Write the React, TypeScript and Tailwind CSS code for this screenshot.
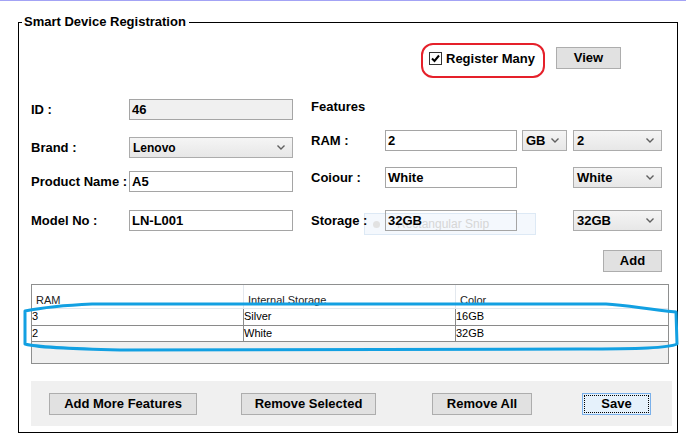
import React from 'react';

const font = { fontFamily: '"Liberation Sans", Arial, sans-serif' };

const Chevron = () => (
  <svg width="8" height="5" viewBox="0 0 8 5" className="shrink-0">
    <path d="M0.5 0.5 L4 4 L7.5 0.5" fill="none" stroke="#606060" strokeWidth="1.4" />
  </svg>
);

const TextBox = ({ value, width, bg = 'bg-white' }: { value: string; width: string; bg?: string }) => (
  <div
    className={`${width} ${bg} h-[21px] border border-[#a5a5a5] flex items-center pl-[2px] text-[13px] font-bold text-black`}
  >
    {value}
  </div>
);

const Select = ({ value, width, small, className = '' }: { value: string; width: string; small?: boolean; className?: string }) => (
  <div
    className={`${width} h-[21px] border border-[#acacac] bg-gradient-to-b from-[#f5f5f5] to-[#e7e7e7] flex items-center justify-between pl-[3px] pr-[7px] font-bold text-black ${
      small ? 'text-[12px]' : 'text-[13px]'
    } ${className}`}
  >
    <span>{value}</span>
    <Chevron />
  </div>
);

const Button = ({ label, width, className = '' }: { label: string; width: string; className?: string }) => (
  <div
    className={`${width} h-[22px] border border-[#adadad] bg-[#e1e1e1] flex items-center justify-center text-[13px] font-bold text-black ${className}`}
  >
    {label}
  </div>
);

const LeftRow = ({ label, children, className = '' }: { label: string; children: React.ReactNode; className?: string }) => (
  <div className={`flex items-center h-[21px] ${className}`}>
    <span className="w-[98px] text-[13px] font-bold text-black">{label}</span>
    {children}
  </div>
);

const RightRow = ({ label, children, className = '' }: { label: string; children: React.ReactNode; className?: string }) => (
  <div className={`flex items-center h-[21px] ${className}`}>
    <span className="w-[74px] text-[13px] font-bold text-black">{label}</span>
    {children}
  </div>
);

const rows = [
  ['3', 'Silver', '16GB'],
  ['2', 'White', '32GB'],
];

export default function App() {
  return (
    <div className="relative w-[686px] h-[436px] bg-white border-t border-[#a3a3f5] overflow-hidden" style={font}>
      <div className="relative mt-[21px] ml-[18px] w-[660px] h-[411px] border border-black">
        {/* group title */}
        <span className="absolute left-[3px] -top-[9px] bg-white pl-[2px] pr-[3px] text-[13px] leading-[16px] font-bold text-black">
          Smart Device Registration
        </span>

        <div className="pl-[12px]">
          {/* register many + view */}
          <div className="flex justify-end items-start pr-[56px] mt-[20px]">
            <div className="w-[124px] h-[35px] border-2 border-[#e5202a] rounded-[12px] flex items-start pl-[6px] pt-[7px]">
              <div className="w-[13px] h-[13px] border border-[#333] bg-white flex items-center justify-center">
                <svg width="11" height="11" viewBox="0 0 11 11">
                  <path d="M2 5.5 L4.5 8 L9 2.5" fill="none" stroke="#000" strokeWidth="2" />
                </svg>
              </div>
              <span className="ml-[4px] -mt-[1px] text-[13px] leading-[15px] font-bold text-black">Register Many</span>
            </div>
            <Button label="View" width="w-[65px]" className="ml-[11px] mt-[4px]" />
          </div>

          {/* form */}
          <div className="flex mt-[21px]">
            <div className="w-[280px]">
              <LeftRow label="ID :">
                <TextBox value="46" width="w-[164px]" bg="bg-[#f0f0f0]" />
              </LeftRow>
              <LeftRow label="Brand :" className="mt-[17px]">
                <Select value="Lenovo" width="w-[164px]" small />
              </LeftRow>
              <LeftRow label="Product Name :" className="mt-[13px]">
                <TextBox value="A5" width="w-[164px]" />
              </LeftRow>
              <LeftRow label="Model No :" className="mt-[18px]">
                <TextBox value="LN-L001" width="w-[164px]" />
              </LeftRow>
            </div>

            <div>
              <div className="h-[16px] flex items-center text-[13px] font-bold text-black">Features</div>
              <RightRow label="RAM :" className="mt-[15px]">
                <TextBox value="2" width="w-[132px]" />
                <Select value="GB" width="w-[45px]" className="ml-[5px]" />
                <Select value="2" width="w-[89px]" className="ml-[6px]" />
              </RightRow>
              <RightRow label="Coiour :" className="mt-[16px]">
                <TextBox value="White" width="w-[132px]" />
                <Select value="White" width="w-[89px]" className="ml-[56px]" />
              </RightRow>
              <div className="relative mt-[22px]">
                {/* faded snip tooltip left behind the storage field */}
                <div className="absolute left-[53px] top-[3px] w-[172px] h-[22px] border border-[#dde9f5] bg-[#f4f8fd] flex items-center pointer-events-none">
                  <span className="w-[7px] h-[7px] rounded-full bg-[#e2e2e2] ml-[8px]" />
                  <span className="ml-[17px] text-[12px] text-[#d6d6d6]">Rectangular Snip</span>
                </div>
                <RightRow label="Storage :" className="relative">
                  <TextBox value="32GB" width="w-[132px]" bg="bg-transparent" />
                  <Select value="32GB" width="w-[89px]" className="ml-[56px]" />
                </RightRow>
              </div>
            </div>
          </div>

          {/* add */}
          <div className="w-[631px] flex justify-end mt-[19px]">
            <Button label="Add" width="w-[59px]" />
          </div>

          {/* grid */}
          <div className="mt-[12px] w-[638px] h-[80px] border border-[#8e8f8f] flex flex-col text-[11px] text-black">
            <div className="flex h-[24px] bg-white border-b border-[#e3e8ee] shrink-0">
              <div className="w-[212px] border-r border-[#e3e8ee] pl-[4px] pt-[7px] text-[#222]">RAM</div>
              <div className="w-[212px] border-r border-[#e3e8ee] pl-[4px] pt-[7px] text-[#222]">Internal Storage</div>
              <div className="flex-1 pl-[4px] pt-[7px] text-[#222]">Color</div>
            </div>
            {rows.map((r, i) => (
              <div
                key={i}
                className={`flex bg-white border-b border-[#8a8a8a] shrink-0 leading-[15px] ${i === 0 ? 'h-[17px]' : 'h-[16px]'}`}
              >
                <div className="w-[212px] border-r border-[#8a8a8a]">{r[0]}</div>
                <div className="w-[212px] border-r border-[#8a8a8a]">{r[1]}</div>
                <div className="flex-1">{r[2]}</div>
              </div>
            ))}
            <div className="flex-1 bg-[#f0f0f0]" />
          </div>

          {/* bottom buttons */}
          <div className="mt-[17px] w-[641px] h-[45px] bg-[#f0f0f0] flex items-start pt-[12px]">
            <Button label="Add More Features" width="w-[148px]" className="ml-[18px]" />
            <Button label="Remove Selected" width="w-[135px]" className="ml-[44px]" />
            <Button label="Remove All" width="w-[100px]" className="ml-[56px]" />
            <div className="ml-[50px] w-[69px] h-[22px] border border-[#7ab0ea] bg-[#e5f1fb] p-[1px]">
              <div className="w-full h-full border border-dotted border-black flex items-center justify-center text-[13px] font-bold text-black">
                Save
              </div>
            </div>
          </div>
        </div>
      </div>

      {/* hand-drawn annotation around the rows */}
      <svg className="absolute left-0 top-0 pointer-events-none" width="686" height="436" viewBox="0 0 686 436">
        <path
          d="M92 303 L606 303 C625 304 640 307 676 311 L677 343 C668 347 640 348 580 348 L120 349 C80 348 40 347 25 343 L25 310 C40 307 70 304 92 303 Z"
          fill="none"
          stroke="#12a0e2"
          strokeWidth="3"
          strokeLinejoin="round"
        />
      </svg>
    </div>
  );
}
